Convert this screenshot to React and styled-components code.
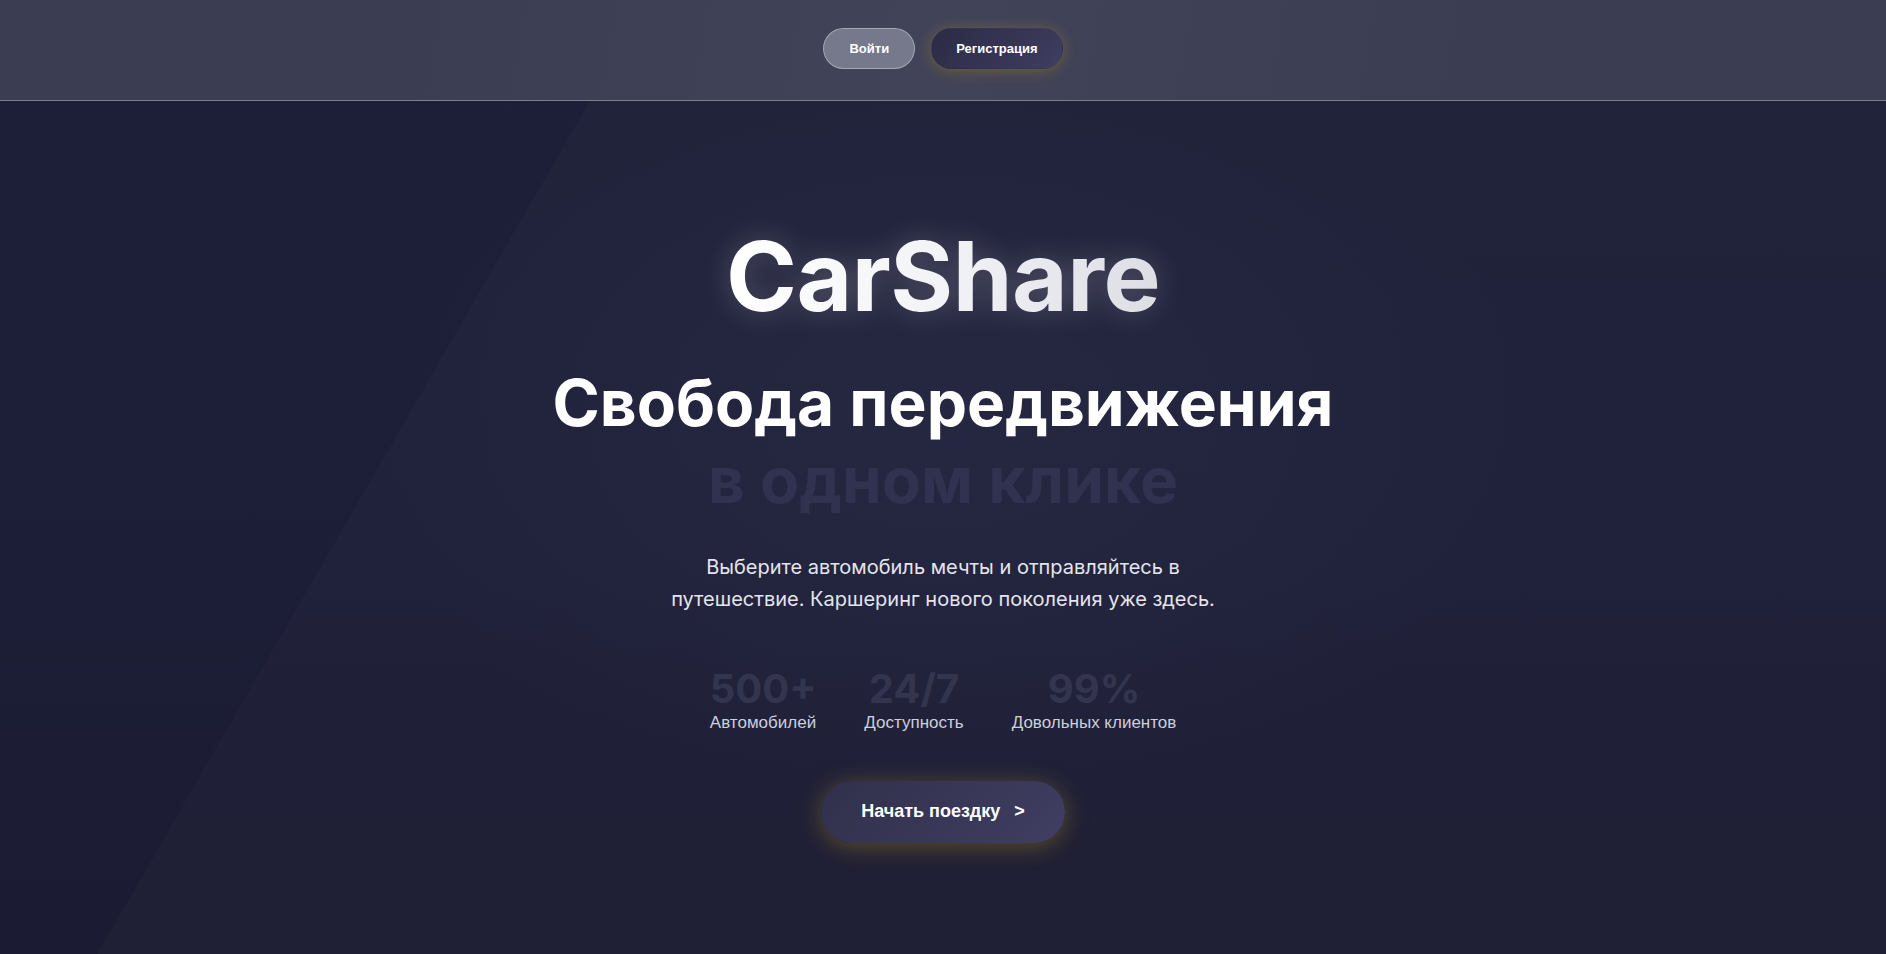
import React from "react";
import styled, { createGlobalStyle } from "styled-components";

const GlobalStyle = createGlobalStyle`
  * { box-sizing: border-box; }
  html, body { margin: 0; padding: 0; }
  body {
    font-family: Inter, "Noto Sans", sans-serif;
    background: #20223a;
    color: #fff;
  }
`;

const Page = styled.div`
  min-height: 100vh;
  display: flex;
  flex-direction: column;
  background:
    linear-gradient(120deg, rgba(10, 14, 40, 0.18) 0 26.6%, rgba(255, 255, 255, 0) 26.6% 100%),
    radial-gradient(ellipse 45% 55% at 50% 45%, rgba(50, 52, 82, 0.3), transparent 70%),
    linear-gradient(180deg, #21233b 0%, #20213a 60%, #1f1f35 100%);
`;

const Header = styled.header`
  height: 101px;
  display: flex;
  justify-content: center;
  align-items: center;
  gap: 16px;
  padding-bottom: 3px;
  border-bottom: 1px solid #7b7d90;
  background:
    linear-gradient(100deg, rgba(255, 255, 255, 0) 20%, rgba(255, 255, 255, 0.03) 50%, rgba(255, 255, 255, 0) 80%),
    #3b3d53;
`;

const NavButton = styled.button`
  height: 41px;
  padding: 0 ${(p) => (p.$primary ? 24 : 25)}px;
  border-radius: 999px;
  font-family: "Liberation Sans", Arial, sans-serif;
  font-weight: 700;
  font-size: 13px;
  color: #fff;
  cursor: pointer;
  border: 1px solid ${(p) => (p.$primary ? "transparent" : "rgba(255,255,255,0.35)")};
  background: ${(p) =>
    p.$primary
      ? "linear-gradient(135deg, #2c2b45 0%, #3f3d61 100%)"
      : "#76788b"};
  box-shadow: ${(p) =>
    p.$primary ? "0 2px 14px rgba(214, 175, 60, 0.4), 0 4px 10px rgba(0,0,0,0.2)" : "none"};
`;

const Hero = styled.main`
  flex: 1;
  display: flex;
  flex-direction: column;
  align-items: center;
  text-align: center;
  padding-top: 118px;
`;

const Brand = styled.h1`
  margin: 0 0 31px;
  font-size: 96px;
  line-height: 1.2;
  font-weight: 700;
  letter-spacing: -0.5px;
  background: linear-gradient(90deg, #ffffff 0%, #f2f3f6 50%, #dcdee4 100%);
  -webkit-background-clip: text;
  background-clip: text;
  color: transparent;
  filter: drop-shadow(0 0 14px rgba(255, 255, 255, 0.22));
`;

const Headline = styled.h2`
  margin: 0 0 32px;
  font-size: 64px;
  line-height: 1.2;
  font-weight: 700;
  letter-spacing: 0;
  color: #ffffff;
`;

const Faded = styled.span`
  display: block;
  color: #30324f;
`;

const Lead = styled.p`
  margin: 0 0 52px;
  max-width: 600px;
  font-size: 20px;
  line-height: 32px;
  color: #e4e5ec;
`;

const Stats = styled.div`
  display: flex;
  gap: 48px;
  margin-bottom: 47px;
`;

const Stat = styled.div`
  display: flex;
  flex-direction: column;
  align-items: center;
`;

const StatValue = styled.span`
  font-size: 40px;
  line-height: 44px;
  font-weight: 700;
  color: #33354f;
`;

const StatLabel = styled.span`
  margin-top: 1px;
  font-family: "Liberation Sans", Arial, sans-serif;
  font-size: 17px;
  line-height: 22px;
  color: #cdcfda;
`;

const StartButton = styled.button`
  display: flex;
  align-items: center;
  gap: 14px;
  height: 62px;
  padding: 0 40px;
  border: none;
  border-radius: 999px;
  font-family: "Liberation Sans", Arial, sans-serif;
  font-weight: 700;
  font-size: 18px;
  color: #fff;
  cursor: pointer;
  background: linear-gradient(135deg, #31304b 0%, #403e62 100%);
  box-shadow: 0 4px 24px rgba(205, 165, 50, 0.38), 0 8px 20px rgba(0, 0, 0, 0.2);
`;

const stats = [
  { value: "500+", label: "Автомобилей" },
  { value: "24/7", label: "Доступность" },
  { value: "99%", label: "Довольных клиентов" },
];

export default function App() {
  return (
    <>
      <GlobalStyle />
      <Page>
        <Header>
          <NavButton>Войти</NavButton>
          <NavButton $primary>Регистрация</NavButton>
        </Header>
        <Hero>
          <Brand>CarShare</Brand>
          <Headline>
            Свобода передвижения
            <Faded>в одном клике</Faded>
          </Headline>
          <Lead>
            Выберите автомобиль мечты и отправляйтесь в путешествие. Каршеринг
            нового поколения уже здесь.
          </Lead>
          <Stats>
            {stats.map((s) => (
              <Stat key={s.label}>
                <StatValue>{s.value}</StatValue>
                <StatLabel>{s.label}</StatLabel>
              </Stat>
            ))}
          </Stats>
          <StartButton>
            Начать поездку <span>&gt;</span>
          </StartButton>
        </Hero>
      </Page>
    </>
  );
}
